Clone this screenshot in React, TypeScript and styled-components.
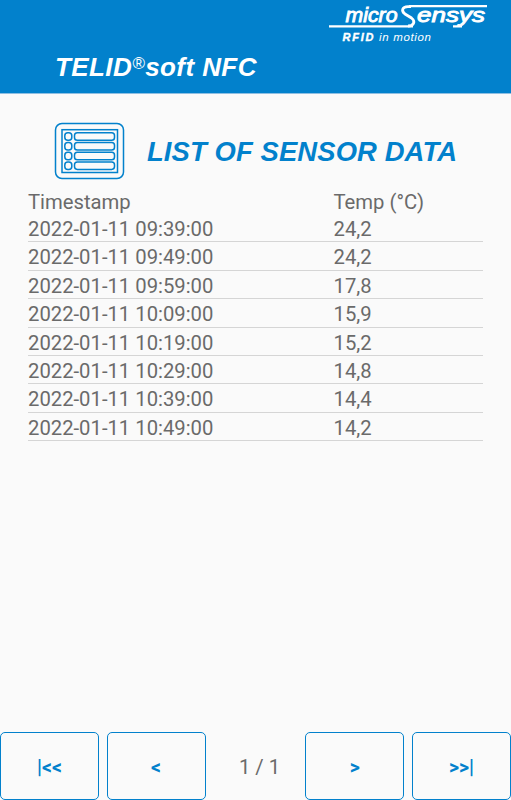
import React from "react";
import styled, { createGlobalStyle } from "styled-components";

const BLUE = "#0281cc";

const GlobalStyle = createGlobalStyle`
  * { box-sizing: border-box; }
  body { margin: 0; background: #fafafa; }
`;

const Screen = styled.div`
  display: flex;
  flex-direction: column;
  width: 511px;
  height: 800px;
  overflow: hidden;
  background: #fafafa;
  color: #6a6a6a;
  font-family: Roboto, sans-serif;
  font-size: 20.25px;
`;

const Header = styled.header`
  display: flex;
  flex-direction: column;
  height: 94px;
  flex: none;
  background: ${BLUE};
  border-bottom: 1px solid #8fbfe2;
`;

const Logo = styled.svg`
  display: block;
  align-self: flex-end;
  width: 191px;
  height: 50px;
  flex: none;
`;

const AppName = styled.div`
  display: flex;
  align-items: baseline;
  padding: 0 0 0 55px;
  color: #fff;
  font: italic bold 26px/34px "Liberation Sans", Arial, sans-serif;
  letter-spacing: 0.42px;
  white-space: pre;
`;

const Registered = styled.span`
  font-size: 17px;
  font-weight: normal;
  line-height: 16px;
  transform: translateY(-7px);
`;

const Heading = styled.div`
  display: flex;
  align-items: center;
  height: 60px;
  margin: 27px 0 0 54px;
  flex: none;
`;

const ListIcon = styled.svg`
  display: block;
  width: 72px;
  height: 60px;
  flex: none;
`;

const Title = styled.h1`
  margin: 0 0 0 21px;
  padding-top: 2px;
  color: ${BLUE};
  font: italic bold 27.4px/34px "Liberation Sans", Arial, sans-serif;
  letter-spacing: 0.12px;
  white-space: nowrap;
`;

const Table = styled.section`
  display: flex;
  flex-direction: column;
  margin: 7px 28px 0;
`;

const Row = styled.div<{ $head?: boolean }>`
  display: grid;
  grid-template-columns: 305.5px 1fr;
  height: ${(p) => (p.$head ? "26px" : "28.42px")};
  line-height: ${(p) => (p.$head ? "29px" : "30px")};
  border-bottom: ${(p) => (p.$head ? "none" : "1px solid #d5d5d5")};
`;

const Pager = styled.nav`
  display: grid;
  grid-template-columns: 99px 99px 1fr 99px 99px;
  column-gap: 7.6px;
  height: 68px;
  margin-top: auto;
`;

const PageButton = styled.button`
  border: 1.5px solid ${BLUE};
  border-radius: 5px;
  padding: 3px 0 0;
  background: transparent;
  color: ${BLUE};
  font: bold 19.5px/24px Roboto, sans-serif;
`;

const PageCount = styled.span`
  display: flex;
  align-items: center;
  justify-content: center;
  padding: 2px 0 0 8px;
`;

const temps = ["24,2", "24,2", "17,8", "15,9", "15,2", "14,8", "14,4", "14,2"];
const times = ["09:39", "09:49", "09:59", "10:09", "10:19", "10:29", "10:39", "10:49"];

function BrandLogo() {
  return (
    <Logo viewBox="0 0 191 50" fill="none" stroke="#fff" strokeWidth="2.2">
      <path d="M167 6.2H89M93 26.4H9M133 26.4H142" />
      <path strokeWidth="2.8" d="M91 6.6H88C82 6.6 81 11 85 14L91.5 18C96 21.5 93.5 26 88 26" />
      <g fill="#fff" fontFamily="Liberation Sans, Arial, sans-serif" fontStyle="italic">
        <text x="25.5" y="22.4" fontSize="21" strokeWidth=".9" textLength="52" lengthAdjust="spacingAndGlyphs">micro</text>
        <text x="97" y="22.4" fontSize="21" strokeWidth=".9" textLength="68" lengthAdjust="spacingAndGlyphs">ensys</text>
        <text x="22.5" y="40.5" fontSize="11" fontWeight="bold" strokeWidth=".4" textLength="31" lengthAdjust="spacing">RFID</text>
        <text x="59" y="40.5" fontSize="11.5" stroke="none" textLength="52" lengthAdjust="spacing">in motion</text>
      </g>
    </Logo>
  );
}

function SensorListIcon() {
  return (
    <ListIcon viewBox="0 0 72 60" fill="none" stroke={BLUE} strokeWidth="1.5">
      <rect x="1.5" y="2.5" width="68" height="55" rx="6.5" />
      <rect x="8" y="8.7" width="55.5" height="42.8" />
      {[11.8, 21.5, 31.2, 40.9].map((y) => (
        <g key={y}>
          <rect x="10.8" y={y} width="7" height="7.5" rx="3" />
          <rect x="20.5" y={y} width="40" height="7.5" rx="2.8" />
        </g>
      ))}
    </ListIcon>
  );
}

export default function App() {
  return (
    <Screen>
      <GlobalStyle />
      <Header>
        <BrandLogo />
        <AppName>
          TELID<Registered>®</Registered>soft NFC
        </AppName>
      </Header>
      <Heading>
        <SensorListIcon />
        <Title>LIST OF SENSOR DATA</Title>
      </Heading>
      <Table>
        <Row $head>
          <span>Timestamp</span>
          <span>Temp (°C)</span>
        </Row>
        {times.map((time, i) => (
          <Row key={time}>
            <span>2022-01-11 {time}:00</span>
            <span>{temps[i]}</span>
          </Row>
        ))}
      </Table>
      <Pager>
        <PageButton>|&lt;&lt;</PageButton>
        <PageButton>&lt;</PageButton>
        <PageCount>1 / 1</PageCount>
        <PageButton>&gt;</PageButton>
        <PageButton>&gt;&gt;|</PageButton>
      </Pager>
    </Screen>
  );
}
